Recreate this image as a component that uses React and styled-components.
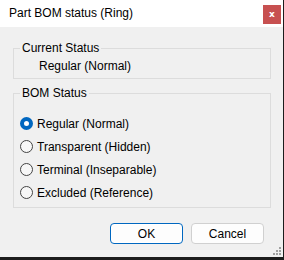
import React, { useState } from 'react'
import styled, { createGlobalStyle } from 'styled-components'

const Global = createGlobalStyle`
  body {
    margin: 0;
    background: #1c1c1c;
    font-family: 'Segoe UI', 'Noto Sans', 'Liberation Sans', sans-serif;
  }
`

const Screen = styled.div`
  width: 284px;
  height: 260px;
  overflow: hidden;
`

const Window = styled.div`
  width: 283px;
  height: 257px;
  background: #f0f0f0;
  display: flex;
  flex-direction: column;
  position: relative;
`

const TitleBar = styled.div`
  height: 27px;
  background: #fff;
  display: flex;
  align-items: center;
  padding-left: 9px;
  padding-right: 2px;
`

const Title = styled.div`
  flex: 1;
  font-size: 12px;
  color: #000;
  font-family: 'Liberation Sans', 'Noto Sans', sans-serif;
  margin-top: -1px;
`

const CloseButton = styled.button`
  width: 18px;
  height: 19px;
  margin-top: 2px;
  border: none;
  padding: 0;
  background: #c75050;
  color: #fff;
  font-family: 'DejaVu Sans', sans-serif;
  font-weight: bold;
  font-size: 9px;
  line-height: 19px;
  text-align: center;
`

const Group = styled.fieldset`
  box-sizing: border-box;
  width: 258px;
  margin: ${(p) => p.top}px 0 0 13px;
  padding: ${(p) => p.pad};
  border: 1px solid #dcdcdc;
  border-radius: 0;
  min-width: 0;
`

const Legend = styled.legend`
  margin-left: 6px;
  padding: 0 2px;
  font-size: 12px;
  line-height: 14px;
  color: #000;
  font-family: 'Liberation Sans', 'Noto Sans', sans-serif;
`

const StatusText = styled.div`
  padding-left: 25px;
  font-size: 12px;
  line-height: 14px;
  color: #000;
  font-family: 'Liberation Sans', 'Noto Sans', sans-serif;
`

const RadioList = styled.div`
  display: flex;
  flex-direction: column;
  padding-left: 6px;
`

const RadioRow = styled.label`
  height: 23px;
  display: flex;
  align-items: center;
  gap: 4px;
  font-size: 12px;
  color: #000;
  font-family: 'Liberation Sans', 'Noto Sans', sans-serif;
`

const Dot = styled.span`
  box-sizing: border-box;
  width: 13px;
  height: 13px;
  border-radius: 50%;
  flex-shrink: 0;
  border: ${(p) => (p.checked ? '4px solid #0067c0' : '1px solid #444')};
  background: ${(p) => (p.checked ? '#fff' : '#f7f7f7')};
`

const Footer = styled.div`
  display: flex;
  justify-content: flex-end;
  gap: 8px;
  padding: 15px 19px 0 0;
`

const Button = styled.button`
  box-sizing: border-box;
  width: 73px;
  height: 21px;
  border-radius: 4px;
  background: #fdfdfd;
  border: 1px solid ${(p) => (p.primary ? '#0067c0' : '#d0d0d0')};
  box-shadow: ${(p) => (p.primary ? 'inset 0 0 0 1px #fff' : 'none')};
  font-size: 12px;
  color: #000;
  font-family: 'Liberation Sans', 'Noto Sans', sans-serif;
  padding: 0;
`

const Grip = styled.svg`
  position: absolute;
  right: 2px;
  bottom: 2px;
`

const options = [
  'Regular (Normal)',
  'Transparent (Hidden)',
  'Terminal (Inseparable)',
  'Excluded (Reference)',
]

export default function App() {
  const [sel, setSel] = useState(0)
  return (
    <Screen>
      <Global />
      <Window>
        <TitleBar>
          <Title>Part BOM status (Ring)</Title>
          <CloseButton>x</CloseButton>
        </TitleBar>
        <Group top={14} pad="4px 0 5px 0">
          <Legend>Current Status</Legend>
          <StatusText>Regular (Normal)</StatusText>
        </Group>
        <Group top={7} pad="12px 0 3px 0">
          <Legend>BOM Status</Legend>
          <RadioList>
            {options.map((o, i) => (
              <RadioRow key={o} onClick={() => setSel(i)}>
                <Dot checked={sel === i} />
                {o}
              </RadioRow>
            ))}
          </RadioList>
        </Group>
        <Footer>
          <Button primary>OK</Button>
          <Button>Cancel</Button>
        </Footer>
        <Grip width="8" height="8" viewBox="0 0 8 8">
          <rect x="6" y="0" width="2" height="2" fill="#a0a0a0" />
          <rect x="3" y="3" width="2" height="2" fill="#a0a0a0" />
          <rect x="6" y="3" width="2" height="2" fill="#a0a0a0" />
          <rect x="0" y="6" width="2" height="2" fill="#a0a0a0" />
          <rect x="3" y="6" width="2" height="2" fill="#a0a0a0" />
          <rect x="6" y="6" width="2" height="2" fill="#a0a0a0" />
        </Grip>
      </Window>
    </Screen>
  )
}
